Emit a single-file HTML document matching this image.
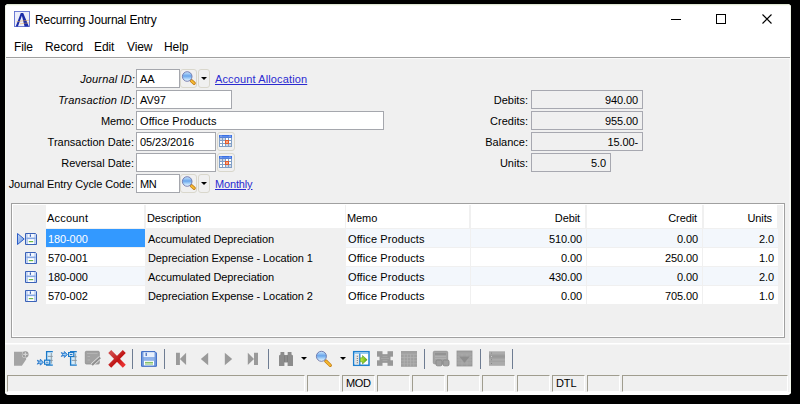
<!DOCTYPE html>
<html><head><meta charset="utf-8">
<style>
*{box-sizing:border-box;margin:0;padding:0}
html,body{width:800px;height:404px;overflow:hidden;background:#000}
body{position:relative;font-family:"Liberation Sans",sans-serif;font-size:11px;color:#000;font-variant-ligatures:none}
.a{position:absolute}
.t{position:absolute;white-space:pre;line-height:13px;font-size:11px;letter-spacing:-0.1px}
.r{text-align:right}
.win{position:absolute;left:5px;top:4px;width:786px;height:391px;background:#f0f0f0;border-radius:4px;overflow:hidden}
.tb{position:absolute;left:0;top:0;width:786px;height:53px;background:#fff}
.box{position:absolute;background:#fff;border:1px solid #a5a7ad;height:19px}
.rbox{position:absolute;background:#f0f0f0;border:1px solid #a7a8b0;height:19px}
.btn{position:absolute;border:1px solid #d9d7cc;border-radius:3px;height:19px;background:#f0f0f0}
.link{color:#2b2bd0;text-decoration:underline}
.sp{position:absolute;top:375px;height:17px;border-top:1px solid #a09d8f;border-left:1px solid #a09d8f;border-right:1px solid #fff;border-bottom:1px solid #fff}
.sep{position:absolute;top:349px;width:2px;height:20px;border-left:2px solid #7b8aa0;border-right:0}
.hdr{position:absolute;top:205px;height:23px;background:#fff}
.cell{position:absolute;height:18px}
</style></head><body>

<svg width="0" height="0" style="position:absolute">
<defs>
  <radialGradient id="glass" cx="0.45" cy="0.35" r="0.7">
    <stop offset="0" stop-color="#e8f6ff"/><stop offset="0.45" stop-color="#8cc4f4"/><stop offset="0.75" stop-color="#4a88dc"/><stop offset="1" stop-color="#dff0ff"/>
  </radialGradient>
  <linearGradient id="glass2" x1="0" y1="0" x2="0" y2="1">
    <stop offset="0" stop-color="#cfe8fd"/><stop offset="0.45" stop-color="#69a6ec"/><stop offset="0.75" stop-color="#b4dafa"/><stop offset="1" stop-color="#f6fbff"/>
  </linearGradient>
  <linearGradient id="redx" x1="0" y1="0" x2="1" y2="1">
    <stop offset="0" stop-color="#d04848"/><stop offset="0.6" stop-color="#c01414"/><stop offset="1" stop-color="#e83030"/>
  </linearGradient>
  <linearGradient id="grn" x1="0" y1="0" x2="1" y2="0">
    <stop offset="0" stop-color="#c8f040"/><stop offset="1" stop-color="#58a810"/>
  </linearGradient>
  <symbol id="mag" viewBox="0 0 16 16">
    <line x1="10.4" y1="10.8" x2="13.2" y2="13.3" stroke="#c07810" stroke-width="3.2" stroke-linecap="round"/>
    <line x1="10.6" y1="11" x2="13" y2="13.1" stroke="#f6bc34" stroke-width="1.9" stroke-linecap="round"/>
    <circle cx="6.2" cy="6.5" r="4.8" fill="url(#glass2)" stroke="#6c74aa" stroke-width="0.9"/>
  </symbol>
  <symbol id="cal" viewBox="0 0 13 12">
    <rect x="0" y="0" width="13" height="12" fill="#7f9ec6"/>
    <rect x="0" y="0" width="13" height="2.6" fill="#3a70e4"/>
    <rect x="1.5" y="0.6" width="1" height="1.2" fill="#dfe8fa"/><rect x="10.5" y="0.6" width="1" height="1.2" fill="#dfe8fa"/>
    <rect x="3" y="1" width="7" height="0.7" fill="#6c98f0"/>
    <g fill="#fff">
      <rect x="1" y="3" width="2" height="2" fill="#cdd6e4"/><rect x="4" y="3" width="2" height="2" fill="#cdd6e4"/><rect x="7" y="3" width="2" height="2"/><rect x="10" y="3" width="2" height="2"/>
      <rect x="1" y="6" width="2" height="2"/><rect x="4" y="6" width="2" height="2"/><rect x="10" y="6" width="2" height="2"/>
      <rect x="1" y="9" width="2" height="2"/><rect x="4" y="9" width="2" height="2"/><rect x="7" y="9" width="2" height="2" fill="#cdd6e4"/><rect x="10" y="9" width="2" height="2" fill="#cdd6e4"/>
    </g>
    <rect x="6" y="5" width="4" height="4" fill="#e45a2a"/>
    <rect x="7" y="6" width="2" height="2" fill="#f2a88c"/>
  </symbol>
  <symbol id="floppy" viewBox="0 0 12 12">
    <path d="M0.5 0.5 H10.5 L11.5 1.5 V11.5 H0.5 Z" fill="#dfe8f8" stroke="#3a62b8" stroke-width="1"/>
    <rect x="1.5" y="1" width="1.2" height="10" fill="#a8c0ec"/>
    <rect x="9.3" y="1" width="1.2" height="10" fill="#a8c0ec"/>
    <rect x="2.7" y="1" width="6.6" height="3.6" fill="#f4f8fe"/>
    <rect x="4.8" y="1.4" width="1.2" height="2.4" fill="#3a62b8"/>
    <rect x="1.5" y="4.6" width="9" height="1.4" fill="#86a8e4"/>
    <rect x="3" y="6.6" width="6" height="4.4" fill="#fff"/>
    <rect x="3.8" y="8" width="4.4" height="1.2" fill="#6cb848"/>
  </symbol>
</defs>
</svg>
<div class="win">
  <div class="tb"></div>
  <div class="a" style="left:0;top:0;width:786px;height:1px;background:#dfe6d4"></div>
  <div class="a" style="left:0;top:1px;width:786px;height:1px;background:#f8faf4"></div>
  <div class="a" style="left:0;top:0;width:1px;height:53px;background:#f0f4e8"></div>
  <div class="a" style="left:785px;top:0;width:1px;height:53px;background:#f0f4e8"></div>
  <div class="a" style="left:1px;top:53px;width:784px;height:1px;background:#a0a0a0"></div>
  <div class="a" style="left:1px;top:54px;width:784px;height:1px;background:#fafafa"></div>
  <div class="a" style="left:0;top:53px;width:1px;height:338px;background:#f4f8ec"></div>
  <div class="a" style="left:785px;top:53px;width:1px;height:338px;background:#f4f8ec"></div>
  <div class="a" style="left:784px;top:55px;width:1px;height:333px;background:#f6f6f6"></div>
  <div class="a" style="left:0;top:388px;width:786px;height:3px;background:#fff"></div>
</div>

<!-- app icon -->
<svg class="a" style="left:14px;top:11px" width="16" height="16" viewBox="0 0 16 16">
  <rect x="0.5" y="0.5" width="15" height="15" fill="#eceefb" stroke="#6070d0" stroke-width="0.9"/>
  <path d="M1.7 15.6 L6.8 2.1 H9.2 L14.9 15.6 H10.6 L7.9 4.7 L3.9 15.6 Z" fill="#1a2ca8"/>
  <path d="M2.5 10.8 Q9 9.6 15.2 9.2 M6 12.8 Q11 12.2 15.2 11.8" stroke="#e8a848" stroke-width="0.7" fill="none" opacity="0.75"/>
</svg>
<div class="t" style="left:35px;top:14px;font-size:12px;letter-spacing:-0.2px;color:#000">Recurring Journal Entry</div>

<!-- window controls -->
<div class="a" style="left:671px;top:19px;width:10px;height:1px;background:#000"></div>
<div class="a" style="left:716px;top:14px;width:10px;height:10px;border:1px solid #000"></div>
<svg class="a" style="left:762px;top:14px" width="10" height="10" viewBox="0 0 10 10"><path d="M0.5 0.5 L9.5 9.5 M9.5 0.5 L0.5 9.5" stroke="#000" stroke-width="1.1"/></svg>

<!-- menu -->
<div class="t" style="left:14px;top:41px;font-size:12px">File</div>
<div class="t" style="left:45px;top:41px;font-size:12px">Record</div>
<div class="t" style="left:94px;top:41px;font-size:12px">Edit</div>
<div class="t" style="left:127px;top:41px;font-size:12px">View</div>
<div class="t" style="left:164px;top:41px;font-size:12px">Help</div>

<!-- labels -->
<div class="t r" style="right:665px;top:73px;font-style:italic;letter-spacing:0.15px">Journal ID:</div>
<div class="t r" style="right:665px;top:94px;font-style:italic;letter-spacing:0.2px">Transaction ID:</div>
<div class="t r" style="right:666px;top:115px;letter-spacing:-0.12px">Memo:</div>
<div class="t r" style="right:666px;top:136px;letter-spacing:0">Transaction Date:</div>
<div class="t r" style="right:666px;top:157px;letter-spacing:0">Reversal Date:</div>
<div class="t r" style="right:666px;top:178px;letter-spacing:-0.1px">Journal Entry Cycle Code:</div>

<!-- inputs -->
<div class="box" style="left:136px;top:69px;width:44px"></div>
<div class="t" style="left:140px;top:73px">AA</div>
<div class="btn" style="left:180px;top:69px;width:17px"></div>
<div class="btn" style="left:198px;top:69px;width:12px"></div>
<div class="t link" style="left:215px;top:73px;letter-spacing:0.13px">Account Allocation</div>

<div class="box" style="left:136px;top:90px;width:96px"></div>
<div class="t" style="left:140px;top:94px">AV97</div>

<div class="box" style="left:136px;top:111px;width:248px"></div>
<div class="t" style="left:140px;top:115px;letter-spacing:0.1px">Office Products</div>

<div class="box" style="left:136px;top:132px;width:80px"></div>
<div class="t" style="left:140px;top:136px">05/23/2016</div>
<div class="btn" style="left:217px;top:132px;width:18px"></div>

<div class="box" style="left:136px;top:153px;width:80px"></div>
<div class="btn" style="left:217px;top:153px;width:18px"></div>

<div class="box" style="left:136px;top:174px;width:44px"></div>
<div class="t" style="left:140px;top:178px;letter-spacing:-0.4px">MN</div>
<div class="btn" style="left:180px;top:174px;width:17px"></div>
<div class="btn" style="left:198px;top:174px;width:12px"></div>
<div class="t link" style="left:215px;top:178px;letter-spacing:-0.15px">Monthly</div>


<svg class="a" style="left:181px;top:70px" width="16" height="16"><use href="#mag"/></svg>
<svg class="a" style="left:201px;top:77px" width="6" height="3"><path d="M0 0H6L3 3Z" fill="#000"/></svg>
<svg class="a" style="left:181px;top:175px" width="16" height="16"><use href="#mag"/></svg>
<svg class="a" style="left:201px;top:182px" width="6" height="3"><path d="M0 0H6L3 3Z" fill="#000"/></svg>
<svg class="a" style="left:219px;top:135px" width="13" height="12"><use href="#cal"/></svg>
<svg class="a" style="left:219px;top:156px" width="13" height="12"><use href="#cal"/></svg>
<!-- right totals -->
<div class="t r" style="right:272px;letter-spacing:0;top:94px">Debits:</div>
<div class="t r" style="right:272px;letter-spacing:0;top:115px">Credits:</div>
<div class="t r" style="right:272px;letter-spacing:0;top:136px">Balance:</div>
<div class="t r" style="right:272px;letter-spacing:0;top:157px">Units:</div>
<div class="rbox" style="left:531px;top:90px;width:112px"></div>
<div class="rbox" style="left:531px;top:111px;width:112px"></div>
<div class="rbox" style="left:531px;top:132px;width:112px"></div>
<div class="rbox" style="left:531px;top:153px;width:80px"></div>
<div class="t r" style="right:162px;top:94px">940.00</div>
<div class="t r" style="right:162px;top:115px">955.00</div>
<div class="t r" style="right:162px;top:136px">15.00-</div>
<div class="t r" style="right:194px;top:157px">5.0</div>

<!-- grid -->
<div class="a" style="left:11px;top:203px;width:774px;height:135px;border:1px solid #a0a0a0"></div>
<div class="a" style="left:12px;top:204px;width:772px;height:133px;border:1px solid #fff"></div>

<div class="hdr" style="left:46px;width:98px"></div>
<div class="hdr" style="left:146px;width:199px"></div>
<div class="hdr" style="left:346px;width:123px"></div>
<div class="hdr" style="left:471px;width:114px"></div>
<div class="hdr" style="left:587px;width:115px"></div>
<div class="hdr" style="left:704px;width:73px"></div>

<div class="t" style="left:47px;top:212px;letter-spacing:0.2px">Account</div>
<div class="t" style="left:147px;top:212px">Description</div>
<div class="t" style="left:347px;top:212px">Memo</div>
<div class="t r" style="right:220px;top:212px">Debit</div>
<div class="t r" style="right:103px;top:212px">Credit</div>
<div class="t r" style="right:28px;top:212px">Units</div>

<div class="cell" style="left:46px;top:229px;width:99px;background:#3399ff"></div>
<div class="cell" style="left:346px;top:229px;width:124px;background:#f3f7fc"></div>
<div class="cell" style="left:471px;top:229px;width:115px;background:#f3f7fc"></div>
<div class="cell" style="left:587px;top:229px;width:115px;background:#f3f7fc"></div>
<div class="cell" style="left:703px;top:229px;width:75px;background:#f3f7fc"></div>
<div class="t" style="color:#fff;left:48px;top:233px">180-000</div>
<div class="t" style="left:148px;top:233px">Accumulated Depreciation</div>
<div class="t" style="left:348px;top:233px;letter-spacing:0.1px">Office Products</div>
<div class="t r" style="right:218px;top:233px">510.00</div>
<div class="t r" style="right:102px;top:233px">0.00</div>
<div class="t r" style="right:26px;top:233px">2.0</div>
<div class="cell" style="left:46px;top:248px;width:99px;background:#fff"></div>
<div class="cell" style="left:346px;top:248px;width:124px;background:#fff"></div>
<div class="cell" style="left:471px;top:248px;width:115px;background:#fff"></div>
<div class="cell" style="left:587px;top:248px;width:115px;background:#fff"></div>
<div class="cell" style="left:703px;top:248px;width:75px;background:#fff"></div>
<div class="t" style="left:48px;top:252px">570-001</div>
<div class="t" style="left:148px;top:252px">Depreciation Expense - Location 1</div>
<div class="t" style="left:348px;top:252px;letter-spacing:0.1px">Office Products</div>
<div class="t r" style="right:218px;top:252px">0.00</div>
<div class="t r" style="right:102px;top:252px">250.00</div>
<div class="t r" style="right:26px;top:252px">1.0</div>
<div class="cell" style="left:46px;top:267px;width:99px;background:#f3f7fc"></div>
<div class="cell" style="left:346px;top:267px;width:124px;background:#f3f7fc"></div>
<div class="cell" style="left:471px;top:267px;width:115px;background:#f3f7fc"></div>
<div class="cell" style="left:587px;top:267px;width:115px;background:#f3f7fc"></div>
<div class="cell" style="left:703px;top:267px;width:75px;background:#f3f7fc"></div>
<div class="t" style="left:48px;top:271px">180-000</div>
<div class="t" style="left:148px;top:271px">Accumulated Depreciation</div>
<div class="t" style="left:348px;top:271px;letter-spacing:0.1px">Office Products</div>
<div class="t r" style="right:218px;top:271px">430.00</div>
<div class="t r" style="right:102px;top:271px">0.00</div>
<div class="t r" style="right:26px;top:271px">2.0</div>
<div class="cell" style="left:46px;top:286px;width:99px;background:#fff"></div>
<div class="cell" style="left:346px;top:286px;width:124px;background:#fff"></div>
<div class="cell" style="left:471px;top:286px;width:115px;background:#fff"></div>
<div class="cell" style="left:587px;top:286px;width:115px;background:#fff"></div>
<div class="cell" style="left:703px;top:286px;width:75px;background:#fff"></div>
<div class="t" style="left:48px;top:290px">570-002</div>
<div class="t" style="left:148px;top:290px">Depreciation Expense - Location 2</div>
<div class="t" style="left:348px;top:290px;letter-spacing:0.1px">Office Products</div>
<div class="t r" style="right:218px;top:290px">0.00</div>
<div class="t r" style="right:102px;top:290px">705.00</div>
<div class="t r" style="right:26px;top:290px">1.0</div>

<!-- toolbar -->
<div class="a" style="left:5px;top:343px;width:786px;height:1px;background:#fff"></div>


<!-- toolbar icons -->
<div class="a" style="left:5px;top:344px;width:786px;height:1px;background:#f8f8f8"></div>
<svg class="a" style="left:13px;top:351px" width="16" height="16" viewBox="0 0 16 16">
  <path d="M1 0.7 H13.1 V8.6 L8.9 14.8 H1 Z" fill="#a4a4a4"/>
  <circle cx="12.4" cy="3.4" r="3.5" fill="#e6e6e6"/>
  <circle cx="12.4" cy="3.4" r="3.1" fill="#9a9a9a"/>
  <path d="M12.4 1.2 V5.6 M10.2 3.4 H14.6" stroke="#d4d4d4" stroke-width="1.2"/>
</svg>
<svg class="a" style="left:35px;top:348px" width="20" height="20" viewBox="0 0 20 20">
  <rect x="11.8" y="4" width="6" height="13" fill="#d4ecfb"/>
  <path d="M17.8 3.6 H11.6 V17.1 H17.8" fill="none" stroke="#1a78c8" stroke-width="1.3"/>
  <path d="M16.3 5 V15.5 M12.8 8.4 H17.8 M12.8 12.4 H17.8" stroke="#8c959c" stroke-width="0.9"/>
  <rect x="9.6" y="12.2" width="5.2" height="4" fill="#fff" stroke="#1a78c8" stroke-width="1.2"/>
  <path d="M10.9 14.2 H13.5" stroke="#1a78c8" stroke-width="1"/>
  <path d="M2.3 12.2 L4.9 13.5 L5.4 11.2 L8.4 14.2 L5.4 17.2 L4.9 14.9 L2.3 16.2 L3.5 14.2 Z" fill="#62aaea" stroke="#1a6cc4" stroke-width="0.8" stroke-linejoin="round"/><path d="M3.8 14.2 H6.8" stroke="#d8ecfc" stroke-width="0.6"/>
</svg>
<svg class="a" style="left:59px;top:348px" width="20" height="20" viewBox="0 0 20 20">
  <rect x="11.8" y="4" width="6" height="13" fill="#d4ecfb"/>
  <path d="M17.8 3.6 H11.6 V17.1 H17.8" fill="none" stroke="#1a78c8" stroke-width="1.3"/>
  <path d="M16.3 5.5 V16 M12.8 8.8 H17.8 M12.8 12.4 H17.8" stroke="#8c959c" stroke-width="0.9"/>
  <rect x="9.6" y="4.6" width="5.2" height="3.8" fill="#fff" stroke="#1a78c8" stroke-width="1.2"/>
  <path d="M10.9 6.5 H13.5" stroke="#1a78c8" stroke-width="1"/>
  <path d="M2.3 4.5 L4.9 5.8 L5.4 3.5 L8.4 6.5 L5.4 9.5 L4.9 7.2 L2.3 8.5 L3.5 6.5 Z" fill="#62aaea" stroke="#1a6cc4" stroke-width="0.8" stroke-linejoin="round"/><path d="M3.8 6.5 H6.8" stroke="#d8ecfc" stroke-width="0.6"/>
</svg>
<svg class="a" style="left:83px;top:348px" width="20" height="20" viewBox="0 0 20 20">
  <rect x="2.3" y="3.3" width="14" height="12.7" rx="1" fill="#a2a2a2" stroke="#8e8e8e" stroke-width="0.8"/>
  <path d="M4 5.5 H14.5 M4.5 8.5 H7 M4.5 12 H7" stroke="#b8b8b8" stroke-width="0.8"/>
  <path d="M9 17 L17.2 9.5" stroke="#f0f0f0" stroke-width="3.4"/>
  <path d="M9 17 L17.2 9.5" stroke="#8e8e8e" stroke-width="2.2"/>
</svg>
<svg class="a" style="left:107px;top:348px" width="20" height="20" viewBox="0 0 20 20">
  <path d="M4.2 5 L15.8 16.8 M15.8 5 L4.2 16.8" stroke="url(#redx)" stroke-width="4.2" stroke-linecap="square"/>
</svg>
<div class="sep" style="left:132px;width:1px;border:0;background:#6e7c92"></div>
<svg class="a" style="left:139px;top:348px" width="20" height="20" viewBox="0 0 20 20">
  <path d="M2.6 3.6 H16 L17.4 5 V18.3 H2.6 Z" fill="#78a0e0" stroke="#3a68c4" stroke-width="1"/>
  <rect x="4.5" y="4.2" width="11" height="4.8" fill="#e8f0fc"/>
  <rect x="6.6" y="4.8" width="1.2" height="3.2" fill="#3a64b8"/>
  <rect x="4.8" y="9" width="10.6" height="3.8" fill="#8fb2ea"/>
  <rect x="5" y="12.8" width="10" height="4.6" fill="#fff"/>
  <path d="M6 14.4 H14 M6 16 H14" stroke="#6ab048" stroke-width="0.9"/>
</svg>
<div class="sep" style="left:164px;width:1px;border:0;background:#6e7c92"></div>
<svg class="a" style="left:172px;top:348px" width="20" height="20" viewBox="0 0 20 20">
  <path d="M4 4.7 H7.9 V17 H4 Z M7.9 10.9 L14.1 4.7 V17 Z" fill="#9a9a9a"/>
</svg>
<svg class="a" style="left:196px;top:348px" width="20" height="20" viewBox="0 0 20 20">
  <path d="M4.8 11 L12.2 4.8 V17.2 Z" fill="#9a9a9a"/>
</svg>
<svg class="a" style="left:220px;top:348px" width="20" height="20" viewBox="0 0 20 20">
  <path d="M12.2 11 L4.8 4.8 V17.2 Z" fill="#9a9a9a"/>
</svg>
<svg class="a" style="left:244px;top:348px" width="20" height="20" viewBox="0 0 20 20">
  <path d="M3.8 4.7 L10 10.9 L3.8 17 Z M10 4.7 H14 V17 H10 Z" fill="#9a9a9a"/>
</svg>
<div class="sep" style="left:268px;width:1px;border:0;background:#6e7c92"></div>
<svg class="a" style="left:277px;top:348px" width="20" height="20" viewBox="0 0 20 20">
  <path d="M3.5 4 H7.3 V6.5 L7.6 7 H10.4 L10.7 6.5 V4 H14.5 V6.5 L16 7.5 V18 H10.6 V14.5 H7.4 V18 H2 V7.5 L3.5 6.5 Z" fill="#8c8c8c"/>
  <path d="M7.5 7.5 V14 M10.5 7.5 V14" stroke="#7a7a7a" stroke-width="0.7"/>
</svg>
<svg class="a" style="left:301px;top:357px" width="6" height="3"><path d="M0 0H6L3 3Z" fill="#000"/></svg>
<svg class="a" style="left:315px;top:350px" width="18" height="18" viewBox="0 0 18 18">
  <line x1="10.8" y1="11" x2="15.3" y2="15.4" stroke="#c07810" stroke-width="3.2" stroke-linecap="round"/>
  <line x1="11" y1="11.2" x2="15.1" y2="15.2" stroke="#f4b830" stroke-width="2" stroke-linecap="round"/>
  <circle cx="6.4" cy="6.3" r="5" fill="url(#glass2)" stroke="#6a74a8" stroke-width="0.9"/>
</svg>
<svg class="a" style="left:340px;top:357px" width="6" height="3"><path d="M0 0H6L3 3Z" fill="#000"/></svg>
<svg class="a" style="left:351px;top:348px" width="20" height="20" viewBox="0 0 20 20">
  <rect x="2.7" y="3.7" width="15.3" height="13.6" fill="#fff" stroke="#1e80d0" stroke-width="1.5"/>
  <path d="M3.5 5.3 H17.2" stroke="#7cc0f0" stroke-width="1"/>
  <rect x="3.6" y="6.5" width="4.8" height="10" fill="#e4e4e4"/>
  <path d="M8.8 5.5 V17" stroke="#1e80d0" stroke-width="1.3"/>
  <g fill="#707070"><rect x="5.8" y="7.8" width="1" height="1"/><rect x="5.8" y="10" width="1" height="1"/><rect x="5.8" y="12" width="1" height="1"/><rect x="5.8" y="14.2" width="1" height="1"/></g>
  <path d="M9.4 9.8 H11.5 V7.5 L16.2 11.8 L11.5 16 V13.8 H9.4 Z" fill="url(#grn)" stroke="#3a8a10" stroke-width="0.5"/>
</svg>
<svg class="a" style="left:375px;top:348px" width="20" height="20" viewBox="0 0 20 20">
  <g fill="#989898">
    <rect x="2" y="3.2" width="5.5" height="5.5"/><rect x="12.5" y="3.2" width="5.5" height="5.5"/>
    <rect x="2" y="12.3" width="5.5" height="5.5"/><rect x="12.5" y="12.3" width="5.5" height="5.5"/>
    <rect x="4.5" y="6" width="11" height="9"/>
  </g>
  <path d="M7.5 6.5 H12.5 M7.5 8.5 H12.5 M6 10.5 H14 M7.5 12.5 H12.5 M7.5 14.5 H12.5" stroke="#b0b0b0" stroke-width="0.6"/>
</svg>
<svg class="a" style="left:399px;top:348px" width="20" height="20" viewBox="0 0 20 20">
  <rect x="2" y="3" width="16" height="15.8" fill="#a0a0a0"/>
  <path d="M2 6.2 H18 M2 9.6 H18 M2 12.8 H18 M2 15.8 H18 M5.2 6.2 V18.8 M8.4 6.2 V18.8 M11.6 6.2 V18.8 M14.8 6.2 V18.8" stroke="#b4b4b4" stroke-width="0.7"/>
</svg>
<div class="sep" style="left:424px;width:1px;border:0;background:#6e7c92"></div>
<svg class="a" style="left:431px;top:348px" width="20" height="20" viewBox="0 0 20 20">
  <rect x="2.3" y="3.3" width="14.4" height="12.5" rx="1.2" fill="#a4a4a4" stroke="#8e8e8e" stroke-width="0.8"/>
  <path d="M4 6 H15" stroke="#8e8e8e" stroke-width="1.5"/>
  <path d="M4 8.5 H15 M4 10.5 H15" stroke="#b8b8b8" stroke-width="0.6"/>
  <rect x="5" y="12" width="6" height="5.8" rx="1.5" fill="#a0a0a0" stroke="#8a8a8a" stroke-width="1"/>
  <rect x="12" y="12" width="6" height="5.8" rx="1.5" fill="#a0a0a0" stroke="#8a8a8a" stroke-width="1"/>
</svg>
<svg class="a" style="left:455px;top:348px" width="20" height="20" viewBox="0 0 20 20">
  <rect x="2" y="3" width="15" height="15" fill="#a2a2a2" stroke="#929292" stroke-width="0.8"/>
  <path d="M2 6 H17 M2 9 H17 M2 12 H17 M2 15 H17 M7 6 V18 M12 6 V18" stroke="#b0b0b0" stroke-width="0.6"/>
  <path d="M4.2 8.5 H14.8 L9.5 14.8 Z" fill="#8e8e8e"/>
</svg>
<div class="sep" style="left:480px;width:1px;border:0;background:#6e7c92"></div>
<svg class="a" style="left:487px;top:348px" width="20" height="20" viewBox="0 0 20 20">
  <rect x="2" y="3.3" width="16" height="14.5" fill="#ababab"/>
  <rect x="2" y="7.2" width="16" height="2.6" fill="#999"/>
  <path d="M2 6.8 H18 M2 10.2 H18 M2 13.3 H18" stroke="#9a9a9a" stroke-width="0.6"/>
  <g fill="#888"><rect x="4" y="4.6" width="1" height="1"/><rect x="4" y="8" width="1" height="1" fill="#ccc"/><rect x="4" y="11.2" width="1" height="1"/><rect x="4" y="15" width="1" height="1"/></g>
</svg>
<div class="sep" style="left:512px;width:1px;border:0;background:#6e7c92"></div>
<!-- grid row icons -->
<svg class="a" style="left:17px;top:233px" width="8" height="12" viewBox="0 0 8 12">
  <defs><linearGradient id="arrg" x1="0" y1="0" x2="1" y2="1"><stop offset="0" stop-color="#c4d8f6"/><stop offset="1" stop-color="#6a94dc"/></linearGradient></defs><path d="M0.5 0.5 L7.2 6 L0.5 11.5 Z" fill="url(#arrg)" stroke="#2c5ec8" stroke-width="1"/>
</svg>
<svg class="a" style="left:25px;top:233px" width="12" height="12"><use href="#floppy"/></svg>
<svg class="a" style="left:25px;top:252px" width="12" height="12"><use href="#floppy"/></svg>
<svg class="a" style="left:25px;top:271px" width="12" height="12"><use href="#floppy"/></svg>
<svg class="a" style="left:25px;top:290px" width="12" height="12"><use href="#floppy"/></svg>
<!-- status bar -->
<div class="sp" style="left:7px;width:298px"></div>
<div class="sp" style="left:307px;width:33px"></div>
<div class="sp" style="left:342px;width:33px"></div>
<div class="sp" style="left:377px;width:33px"></div>
<div class="sp" style="left:412px;width:33px"></div>
<div class="sp" style="left:447px;width:33px"></div>
<div class="sp" style="left:482px;width:33px"></div>
<div class="sp" style="left:517px;width:33px"></div>
<div class="sp" style="left:552px;width:33px"></div>
<div class="sp" style="left:587px;width:33px"></div>
<div class="sp" style="left:622px;width:166px"></div>
<div class="t" style="left:346px;top:377px;letter-spacing:-0.3px">MOD</div>
<div class="t" style="left:556px;top:377px">DTL</div>

</body></html>
